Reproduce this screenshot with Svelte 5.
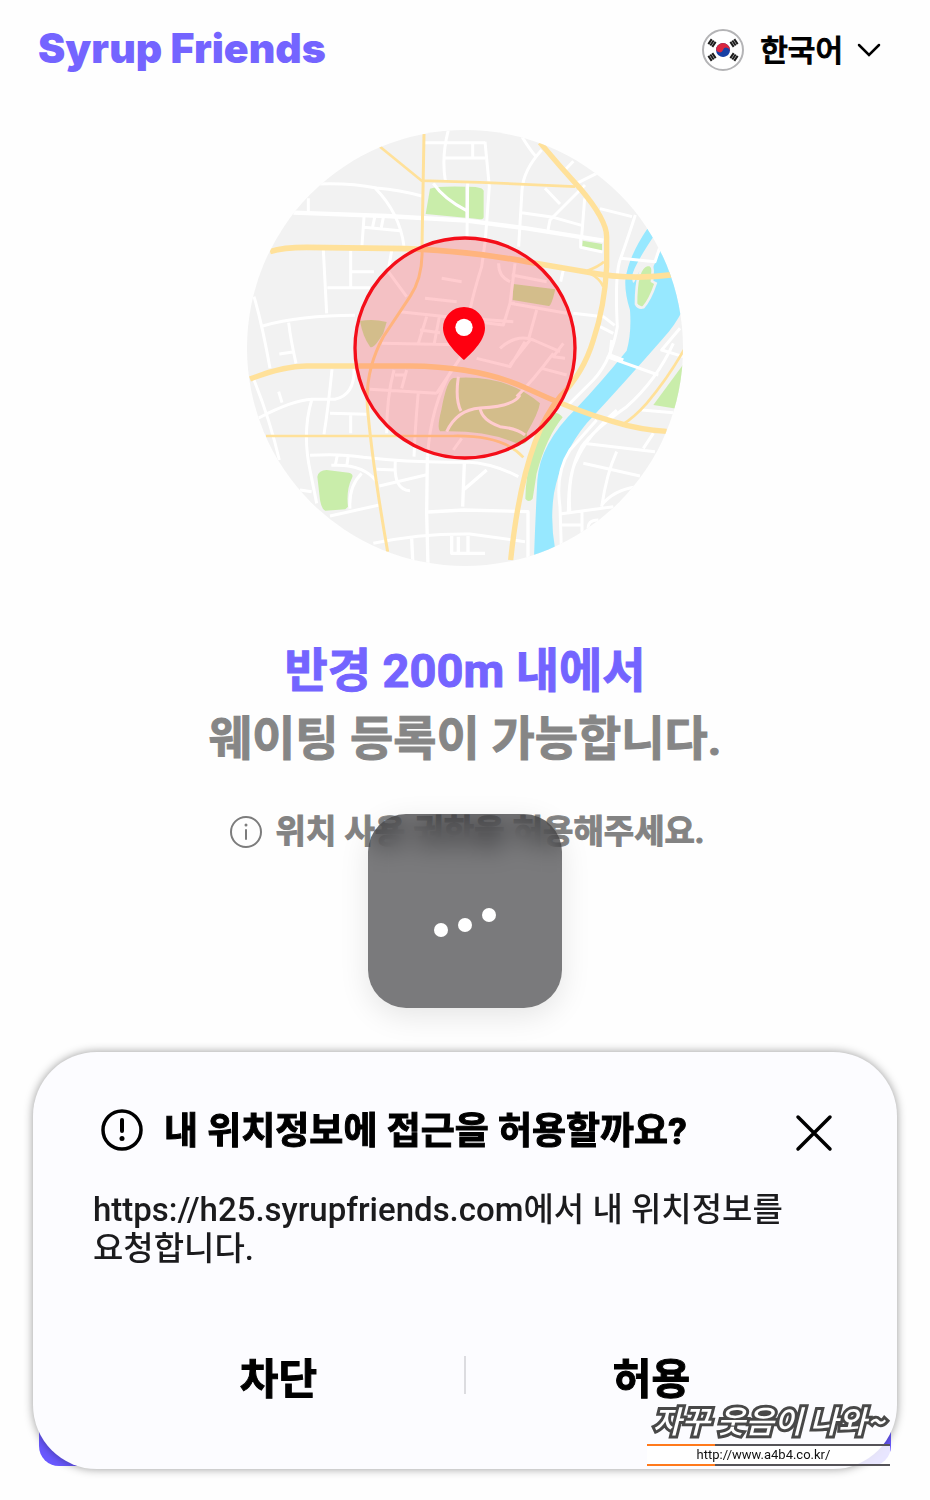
<script lang="ts">
    let open = $state(true)
    const close = () => (open = false)

    // the four trigrams of the flag, placed round the centre
    const trigrams = [
        { x: -11, y: -7, angle: -56 },
        { x: 11, y: -7, angle: 56 },
        { x: -11, y: 7, angle: 56 },
        { x: 11, y: 7, angle: -56 },
    ]
</script>

<div class="page">
    <header>
        <a href="/" class="logo">Syrup Friends</a>
        <button class="lang" type="button">
            <svg class="flag" viewBox="-22 -22 44 44" aria-hidden="true">
                <circle r="20" fill="#fff" stroke="#b4b4b6" stroke-width="2" />
                <g transform="rotate(20)">
                    <circle r="7" fill="#1740a4" />
                    <path d="M-7 0A7 7 0 0 1 7 0A3.500 3.500 0 0 0 0 0A3.500 3.500 0 0 1 -7 0Z" fill="#d9263f" />
                </g>
                {#each trigrams as t}
                    <g transform={`translate(${t.x} ${t.y}) rotate(${t.angle})`} stroke="#1c1c1c" stroke-width="2">
                        <path d="M-3 -2.400H3M-3 0H3M-3 2.400H3" />
                    </g>
                {/each}
            </svg>
            <span>한국어</span>
            <svg class="chevron" viewBox="0 0 26 16" aria-hidden="true">
                <path d="M3 3L13 13L23 3" fill="none" stroke="#000" stroke-width="2.500" stroke-linecap="round" />
            </svg>
        </button>
    </header>

    <main>
        <svg class="map" viewBox="18 27 1314 1314" aria-hidden="true">
            <clipPath id="round"><circle cx="675" cy="684" r="654" /></clipPath>
            <g clip-path="url(#round)" fill="none">
                <rect width="1350" height="1350" fill="#f2f2f2" />

                <g fill="#c9edaa">
                    <path d="M570 206Q590 198 676 200V293L557 282Z" />
                    <path d="M687 200Q731 200 731 214V290Q731 298 720 298L687 294Z" />
                    <path d="M1028 362L1086 372V394L1026 382Z" />
                    <path d="M820 492L946 508Q934 560 926 558L818 540Z" />
                    <path d="M360 603Q400 596 440 606L430 640Q400 690 390 680Q368 650 360 603Z" />
                    <path d="M640 774Q800 762 900 850Q895 880 860 940Q870 980 830 970Q740 930 600 934Q590 925 604 870Q620 780 640 774Z" />
                    <path d="M232 1070Q236 1050 260 1050L326 1058Q342 1062 336 1074Q318 1110 324 1160L316 1168L256 1172Q246 1170 240 1140Z" />
                    <path d="M930 884Q948 870 968 892Q920 950 890 1060L878 1136Q866 1150 856 1136Q858 1000 930 884Z" />
                    <path d="M1332 730L1240 855L1332 870Z" />
                </g>

                <path d="M1222 326Q1165 410 1156 480Q1154 520 1170 570Q1175 640 1160 692Q1080 790 1010 864Q900 970 892 1080Q886 1200 882 1310L945 1285Q930 1200 942 1120Q965 1000 1040 910Q1160 780 1265 660Q1320 600 1340 540L1262 390L1240 440Q1220 460 1216 440Q1195 450 1186 480Q1178 500 1176 470Q1180 440 1240 350Z" fill="#97e8ff" />
                <path d="M1224 434Q1238 434 1238 452L1236 484L1247 490Q1230 540 1210 562Q1196 566 1188 552Q1188 440 1224 434Z" fill="#c9edaa" stroke="#f2f2f2" stroke-width="8" />

                <!-- side streets -->
                <g stroke="#fff" stroke-width="9" stroke-linejoin="round">
                    <path d="M160 278L440 288L680 302L860 325L1090 362" stroke-width="13" />
                    <path d="M230 192Q330 188 410 204Q480 210 545 228M405 204Q480 280 492 380M205 235V275M372 290L366 376M372 322L480 332M404 292L398 320M430 292L424 322M555 68H735M625 30Q604 110 616 182M615 114H735M698 70V112" />
                    <path d="M735 65L748 200L736 360L725 440Q700 520 690 570M683 190L681 350M580 190Q610 235 680 272" />
                    <path d="M250 390L260 580M332 392V500M332 455H402M262 503H390M455 392L445 450M42 530Q66 610 90 745M68 618Q180 586 345 586M146 608Q152 660 168 730M118 702L158 696M445 455L500 530" />
                    <path d="M846 50Q870 90 890 112M905 90Q850 150 846 210L836 380M915 205L960 252M1035 195L930 300L924 330M845 278L940 292L1025 316M1034 235L1025 350M1022 345V382L1088 396M975 150L1000 124M1010 190L1070 160M1080 266L1176 290" />
                    <path d="M1186 285Q1155 380 1140 420Q1124 470 1132 620Q1115 720 1060 780L980 860M1142 415L1245 425L1260 380M1000 580L1090 590L1124 616M1080 620L1120 640M970 450L962 485" />
                    <path d="M605 475L665 485M555 535L650 545M480 575L620 590L820 605M560 590L535 670M598 590L582 675M540 630L600 638M425 670L660 674M776 430Q775 470 810 485M825 430L810 550L790 615L735 608M815 465L920 485M810 550L980 580M890 570L865 660M820 545V550M780 685Q830 640 880 660L960 695" />
                    <path d="M56 894Q160 840 215 838L285 838Q345 825 342 745M276 748Q265 860 252 943M270 880L380 883M332 883V940M42 780Q90 900 118 1020M116 815L126 848M215 840Q185 940 212 1060L230 1150" />
                    <path d="M210 1006Q300 1000 370 1012Q530 1030 680 1026Q760 1030 835 1070M274 1036Q370 1030 410 1085M292 1005L286 1036M325 1006L320 1040M365 1060Q325 1100 330 1166M270 1188L418 1155M180 1110L215 1115M410 1048L465 1050M418 1098L560 1064M466 1025Q460 1110 510 1112" />
                    <path d="M400 1270Q540 1240 690 1242L855 1265" />
                    <path d="M562 1010L560 1180L564 1340M565 1176L670 1170L864 1175V1315M673 1030L668 1160M673 1108L740 1050M515 1255L518 1320M635 1248V1300H735M655 1250V1300M684 1248V1300" stroke-width="10" />
                    <path d="M390 808L590 820M462 750Q440 830 440 940M500 750L485 805M465 765H495M535 815Q525 930 522 1010M640 740Q570 860 563 1010M690 670L590 820M710 715L810 740L855 665M810 735L870 660M905 745L980 765M940 700Q880 780 830 830M970 670L940 710L975 715" />
                    <path d="M655 770Q645 840 663 873M620 935Q650 870 720 864Q820 860 840 825M720 864Q725 900 780 920Q830 925 855 945M640 990L665 955" />
                    <path d="M1100 710L1255 765M1115 660L1110 705L1150 720M1300 670Q1250 780 1160 860Q1060 930 1025 980Q980 1060 990 1180M1130 870Q1040 950 1010 1020Q985 1060 985 1180M960 1160L964 1285M960 1160Q945 1060 990 990L1070 900" />
                    <path d="M1030 970L1245 995M1240 940L1210 985M1030 1030L1200 1068M1130 995Q1100 1060 1085 1160M1085 1155Q1120 1110 1190 1100M960 1182L1120 1160M1026 1175V1240M960 1215H1025M1045 1230Q1040 1200 1075 1200M1205 870L1300 878" />
                    <path d="M1320 625L1265 690L1330 710" />
                </g>

                <!-- main roads -->
                <g stroke="#ffe19a">
                    <path d="M90 395Q130 382 200 382L500 386Q700 395 860 425L1040 456Q1170 482 1300 464" stroke-width="17" />
                    <path d="M900 68Q960 140 1020 205Q1100 300 1100 350V440Q1094 560 1060 660Q1030 760 960 830Q850 960 812 1320" stroke-width="16" />
                    <path d="M1042 452Q1075 440 1092 425M1045 458Q1080 475 1090 500" stroke-width="8" />
                    <path d="M30 777Q130 738 200 738H510Q720 740 860 805Q1000 870 1120 905Q1200 930 1280 934" stroke-width="16" />
                    <path d="M552 42L546 380Q550 470 510 530L430 650Q370 760 384 880Q400 1050 443 1295" stroke-width="9" />
                    <path d="M420 80L545 182L720 187L1005 200M78 948H640Q790 945 850 1012" stroke-width="8" />
                    <path d="M1332 690Q1280 780 1220 850Q1180 895 1145 915" stroke-width="8" />
                </g>
            </g>
            <circle cx="675" cy="684" r="330" fill="#ff0010" fill-opacity="0.2" stroke="#f40e19" stroke-width="10" />
            <path d="M672 561A63 63 0 0 0 609 624C609 665 655 704 672 720C689 704 735 665 735 624A63 63 0 0 0 672 561Z" fill="#ff0010" />
            <circle cx="672" cy="622" r="26" fill="#fff" />
        </svg>

        <h1><em>반경 200m 내에서</em><br />웨이팅 등록이 가능합니다.</h1>

        <div class="notice">
            <svg class="info" viewBox="0 0 34 34" aria-hidden="true">
                <circle cx="17" cy="17" r="15" fill="none" stroke="#7c7c7c" stroke-width="2" />
                <circle cx="17" cy="10" r="1.500" fill="#7c7c7c" />
                <path d="M17 15V24" stroke="#7c7c7c" stroke-width="2" stroke-linecap="round" />
            </svg>
            <p>위치 사용 권한을 허용해주세요.</p>
            <div class="loader">
                <svg viewBox="0 0 64 30" aria-hidden="true" fill="#fff">
                    <circle cx="8" cy="22" r="7" />
                    <circle cx="32" cy="17" r="7" />
                    <circle cx="56" cy="7" r="7" />
                </svg>
            </div>
        </div>
    </main>

    <div class="bottom">
        <button class="submit" type="button" aria-label="확인"></button>
        {#if open}
            <div class="dialog" role="dialog" aria-labelledby="dialog-title">
                <div class="title">
                    <svg class="alert" viewBox="0 0 42 42" aria-hidden="true">
                        <circle cx="21" cy="21" r="19" fill="none" stroke="#000" stroke-width="3.500" />
                        <path d="M21 11V22" stroke="#000" stroke-width="4" stroke-linecap="round" />
                        <circle cx="21" cy="29.500" r="2.500" />
                    </svg>
                    <h2 id="dialog-title">내 위치정보에 접근을 허용할까요?</h2>
                    <button class="close" type="button" aria-label="닫기" onclick={close}>
                        <svg viewBox="0 0 38 38" aria-hidden="true">
                            <path d="M3 3L35 35M35 3L3 35" stroke="#000" stroke-width="3.500" stroke-linecap="round" />
                        </svg>
                    </button>
                </div>
                <p>https://h25.syrupfriends.com에서 내 위치정보를 요청합니다.</p>
                <div class="actions">
                    <button type="button" onclick={close}>차단</button>
                    <span class="divider"></span>
                    <button type="button" onclick={close}>허용</button>
                </div>
            </div>
        {/if}
        <div class="watermark">
            <span class="brand">자꾸 웃음이 나와~</span>
            <a href="http://www.a4b4.co.kr/">http://www.a4b4.co.kr/</a>
        </div>
    </div>
</div>

<style>
    :global(body) {
        background: #fefefe;
    }

    .page {
        font-family: Roboto, "Noto Sans CJK KR", sans-serif;
        padding-bottom: 31px;
    }

    button {
        font: inherit;
        color: inherit;
        background: none;
        border: none;
        padding: 0;
        cursor: pointer;
    }

    svg {
        display: block;
        flex: none;
    }

    header {
        display: flex;
        align-items: center;
        justify-content: space-between;
        height: 100px;
        padding: 0 48px 0 38px;
    }

    .logo {
        padding-bottom: 4px;
        font-family: Inter, sans-serif;
        font-size: 41px;
        font-weight: 900;
        line-height: 48px;
        color: #7464ff;
        text-decoration: none;
    }

    .lang {
        display: flex;
        align-items: center;
        font-size: 30px;
        font-weight: 500;
        color: #000;
    }

    .lang span {
        padding-bottom: 4px;
        -webkit-text-stroke: 1px;
    }

    .flag {
        width: 44px;
        margin-right: 15px;
    }

    .chevron {
        width: 26px;
        margin-left: 13px;
    }

    main {
        display: flex;
        flex-direction: column;
        align-items: center;
        padding-top: 29px;
    }

    .map {
        width: 438px;
        max-width: 90%;
    }

    h1 {
        margin: 70px 0 41px;
        font-size: 47px;
        font-weight: 700;
        line-height: 68px;
        text-align: center;
        color: #868686;
        -webkit-text-stroke: 1px;
    }

    h1 em {
        font-style: normal;
        color: #7464ff;
    }

    .notice {
        position: relative;
        display: flex;
        align-items: center;
        justify-content: center;
        gap: 13px;
        height: 36px;
        padding-left: 3px;
    }

    .notice p {
        margin: 0;
        font-size: 33px;
        font-weight: 700;
        line-height: 36px;
        color: #838383;
        -webkit-text-stroke: 1px;
    }

    .info {
        width: 34px;
    }

    .loader {
        position: absolute;
        top: 0;
        left: 50%;
        transform: translateX(-50%);
        display: grid;
        place-items: center;
        width: 194px;
        height: 194px;
        padding-top: 23px;
        box-sizing: border-box;
        border-radius: 38px;
        background: rgba(0, 0, 3, 0.52);
        backdrop-filter: blur(12px);
        box-shadow: 0 8px 30px rgba(0, 0, 0, 0.1);
    }

    .loader svg {
        width: 64px;
    }

    .bottom {
        position: relative;
        display: grid;
        margin: 202px 33px 0;
    }

    .submit,
    .dialog {
        grid-area: 1 / 1;
    }

    .submit {
        align-self: end;
        height: 100px;
        margin: 0 6px 3px;
        border-radius: 20px;
        background: #6a59ff;
    }

    .dialog {
        z-index: 1;
        padding: 50px 60px 44px;
        border-radius: 64px;
        background: #fcfcff;
        box-shadow: 0 0 10px rgba(0, 0, 0, 0.4);
    }

    .title {
        display: flex;
        align-items: center;
        height: 56px;
        padding: 0 4px 0 8px;
    }

    .alert {
        width: 42px;
        margin-right: 21px;
    }

    h2 {
        flex: 1;
        margin: 0;
        padding-top: 3px;
        font-size: 37px;
        font-weight: 700;
        line-height: 56px;
        color: #000;
        -webkit-text-stroke: 1px;
    }

    .close {
        padding-top: 6px;
    }

    .close svg {
        width: 38px;
    }

    .dialog p {
        margin: 32px 0 57px;
        font-size: 33px;
        font-weight: 500;
        line-height: 39px;
        color: #1b1b1d;
        word-break: keep-all;
    }

    .actions {
        display: flex;
        align-items: center;
    }

    .actions button {
        flex: 1;
        height: 100px;
        font-size: 42px;
        font-weight: 700;
        color: #000;
        -webkit-text-stroke: 1px;
    }

    .divider {
        width: 2px;
        height: 38px;
        background: #dcdce0;
    }

    .watermark {
        position: absolute;
        z-index: 2;
        right: 7px;
        bottom: 3px;
        width: 243px;
        text-align: center;
    }

    .brand {
        display: block;
        font-family: "Noto Sans CJK KR", sans-serif;
        font-size: 31px;
        font-style: italic;
        font-weight: 500;
        line-height: 48px;
        white-space: nowrap;
        color: #fff;
        -webkit-text-stroke: 6px #484848;
        paint-order: stroke fill;
    }

    .watermark a {
        display: block;
        padding-right: 10px;
        border: solid;
        border-width: 2px 0;
        border-image: linear-gradient(to right, #ff7a1c 69px, #555358 69px) 2;
        background: rgba(255, 255, 255, 0.85);
        font-size: 13px;
        line-height: 18px;
        color: #111;
        text-decoration: none;
    }
</style>
